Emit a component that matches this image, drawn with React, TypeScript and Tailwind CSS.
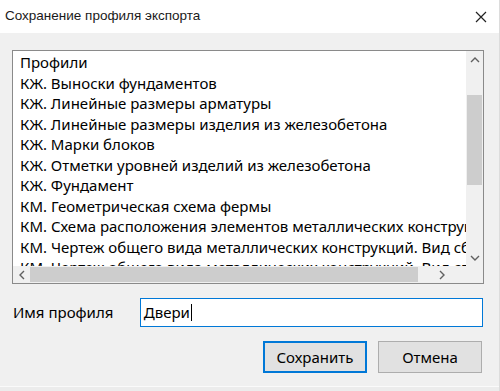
import React from "react";

const profiles = [
  "Профили",
  "КЖ. Выноски фундаментов",
  "КЖ. Линейные размеры арматуры",
  "КЖ. Линейные размеры изделия из железобетона",
  "КЖ. Марки блоков",
  "КЖ. Отметки уровней изделий из железобетона",
  "КЖ. Фундамент",
  "КМ. Геометрическая схема фермы",
  "КМ. Схема расположения элементов металлических конструкций",
  "КМ. Чертеж общего вида металлических конструкций. Вид сбоку",
  "КМ. Чертеж общего вида металлических конструкций. Вид сверху",
];

function Chevron({ dir }: { dir: "up" | "down" | "left" | "right" }) {
  const pts = {
    up: "1,6 5,2 9,6",
    down: "1,2 5,6 9,2",
    left: "6,1 2,5 6,9",
    right: "2,1 6,5 2,9",
  }[dir];
  const vertical = dir === "up" || dir === "down";
  return (
    <svg width={vertical ? 10 : 8} height={vertical ? 8 : 10} viewBox={vertical ? "0 0 10 8" : "0 0 8 10"}>
      <polyline points={pts} fill="none" stroke="#606060" strokeWidth="1.4" />
    </svg>
  );
}

export default function App() {
  return (
    <div className="w-[500px] h-[391px] bg-[#f0f0f0] flex flex-col border-r border-[#dcdcdc] overflow-hidden" style={{ fontFamily: '"Noto Sans", "Open Sans", sans-serif' }}>
      {/* title bar */}
      <div className="h-[33px] bg-white flex items-center justify-between pl-[5px] pr-[12px] shrink-0">
        <span className="text-[13.5px] text-[#1a1a1a] font-['Liberation_Sans',sans-serif]">Сохранение профиля экспорта</span>
        <svg width="12" height="12" viewBox="0 0 12 12">
          <path d="M1 1 L11 11 M11 1 L1 11" stroke="#222" strokeWidth="1.2" />
        </svg>
      </div>

      <div className="flex-1 flex flex-col pl-[12px] pr-[16px] pt-[17px]">
        {/* list box */}
        <div className="w-[472px] h-[234px] border border-[#8a8a8a] bg-white grid grid-cols-[1fr_17px] grid-rows-[1fr_17px]">
          <div className="overflow-hidden pl-[7px] pt-[1px]">
            {profiles.map((p) => (
              <div key={p} className="h-[20.5px] leading-[20.5px] text-[15px] text-black whitespace-nowrap">
                {p}
              </div>
            ))}
          </div>
          <div className="bg-[#f0f0f0] flex flex-col">
            <div className="h-[17px] flex items-center justify-center">
              <Chevron dir="up" />
            </div>
            <div className="flex-1 flex flex-col pt-[27px] pb-[64px]">
              <div className="flex-1 bg-[#cdcdcd] mx-[1px]" />
            </div>
            <div className="h-[17px] flex items-center justify-center">
              <Chevron dir="down" />
            </div>
          </div>
          <div className="bg-[#f0f0f0] flex items-stretch">
            <div className="w-[17px] flex items-center justify-center">
              <Chevron dir="left" />
            </div>
            <div className="w-[388px] bg-[#cdcdcd] my-[1px]" />
            <div className="flex-1 flex items-center justify-center">
              <Chevron dir="right" />
            </div>
          </div>
          <div className="bg-[#f0f0f0]" />
        </div>

        {/* profile name */}
        <div className="flex items-center mt-[14px]">
          <span className="w-[128px] pl-[1px] text-[15px] text-black">Имя профиля</span>
          <div className="w-[344px] h-[29px] border border-[#0078d7] bg-white flex items-center pl-[3px]">
            <span className="text-[15px] text-black">Двери</span>
            <span className="w-[1px] h-[17px] bg-black ml-[1px]" />
          </div>
        </div>

        {/* buttons */}
        <div className="flex justify-end gap-[11px] mt-[14px] pr-[1px]">
          <button className="w-[104px] h-[32px] bg-[#e1e1e1] border-2 border-[#0078d7] text-[15px] text-black">
            Сохранить
          </button>
          <button className="w-[104px] h-[32px] bg-[#e1e1e1] border border-[#adadad] text-[15px] text-black">
            Отмена
          </button>
        </div>
      </div>
      <div className="h-[5px] border-t border-[#fafafa] bg-[#ececec] shrink-0" />
    </div>
  );
}
